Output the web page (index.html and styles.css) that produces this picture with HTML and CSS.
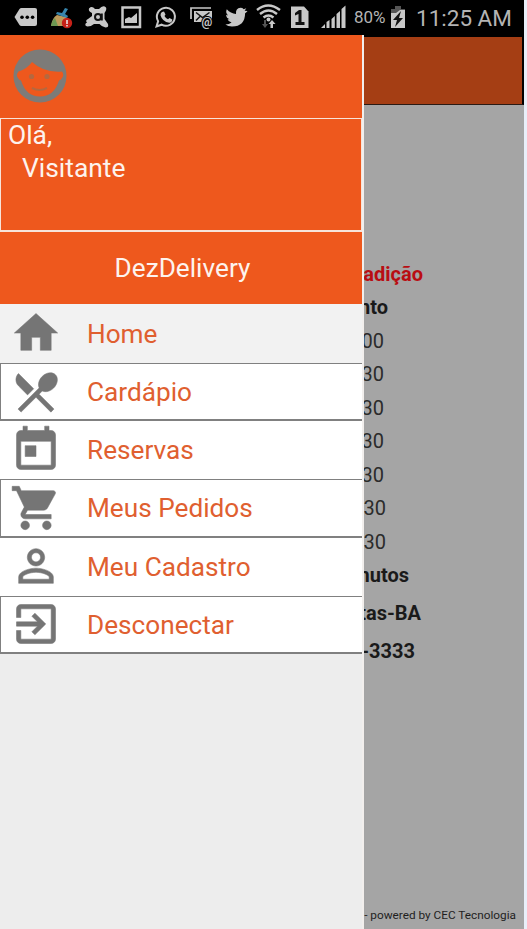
FILE: index.html
```
<!DOCTYPE html>
<html lang="pt-BR">
<head>
  <meta charset="UTF-8">
  <meta name="viewport" content="width=device-width, initial-scale=1.0">
  <title>DezDelivery</title>
  <link rel="stylesheet" href="styles.css">
</head>
<body>
  <div class="screen">
    <div class="status-bar">
      <svg class="slot" viewBox="0 0 35 35"><path fill="#c8c8c8" d="M5.500 17l5-8q.7-1 2-1h13.500q2 0 2 2v14q0 2-2 2H12.500q-1.300 0-2-1z"/><circle cx="13" cy="17.300" r="1.800"/><circle cx="18.300" cy="17.300" r="1.800"/><circle cx="23.600" cy="17.300" r="1.800"/></svg>
      <svg class="slot" viewBox="0 0 35 35"><path fill="#bd9a5b" d="M7 26q1-8 6-11l9 2 3 9z"/><path fill="#6d9853" d="M7 26q1-6 4-8l3 8z"/><path fill="#3785ad" d="M13 12l5 1 3-5 3 1-3 5 3 2-1 2-11-4z"/><circle cx="23" cy="23" r="5.200" fill="#c72118"/><path stroke="#eee" stroke-width="1.500" d="M23 20v4m0 1v1.500"/></svg>
      <svg class="slot" viewBox="0 0 35 35"><path fill="#c8c8c8" d="M10 8.500q3-3 6 .5h4q4-4.500 7-1.500 1 2-1.500 5.500v6l3.500 5q1 3.500-2.500 3.500-3.500-.5-6-3.500h-5.500q-3 2.500-6.500 2.500-3.500-1-1.500-3.500H8q-2-3 1-4l4-3v-3q-4-2-3-4.500z"/><circle cx="19" cy="17" r="3" fill="none" stroke="#111" stroke-width="2"/><path stroke="#111" stroke-width="2" d="M22.800 13.500v7"/></svg>
      <svg class="slot" viewBox="0 0 35 35"><path fill="none" stroke="#c8c8c8" stroke-width="2.500" d="M13.500 7.500h17.500v19.500H13.500z"/><path fill="#c8c8c8" d="M16 23v-4l4-2 2 1 6-5v10z"/></svg>
      <svg class="slot" viewBox="0 0 35 35"><path fill="none" stroke="#c8c8c8" stroke-width="2" d="M12.500 26.500l1.600-5.200a9 9 0 1 1 3.500 3.400z"/><path fill="#c8c8c8" d="M18 12l2-.5 1.500 3-1 1.500q1.200 2.300 3.500 3.300l1.500-1.300 2.800 1.500q0 3-3 3.200-7-1-8.800-7.500 0-2.200 1.500-3.200z"/></svg>
      <svg class="slot" viewBox="0 0 35 35"><path fill="none" stroke="#c8c8c8" stroke-width="1.700" d="M12 19V8h20"/><path fill="#c8c8c8" d="M15 11h18v11H15z"/><path fill="none" stroke="#111" stroke-width="1.500" d="M17 12.500l6.500 5 7-5M17 20.500l4-4"/><text x="22.500" y="25.500" class="at">@</text></svg>
      <svg class="slot" viewBox="0 0 35 35"><path fill="#c8c8c8" d="M33.500 11q-1 1.500-2.400 2.300Q31 26.500 18 26.500q-4 0-6.600-2 3.800 0 6.200-2-3.200-.4-4-3.200h2q-3.300-1-3.500-4.500l2 .6q-3-2.700-1.300-6.100 3.800 4.400 9.200 4.600-.5-5.700 4.500-6.100 2 0 3.200 1.400l2.600-1-1.700 2.500z"/></svg>
      <svg class="slot slot-wifi" viewBox="0 0 28 35"><g fill="none" stroke="#c8c8c8" stroke-width="2.400"><path d="M3 10q11-9 23 0M6 14q8.500-7 17 0M9.500 17.500q5-4 10 0"/></g><circle cx="14.500" cy="19.500" r="2" fill="#c8c8c8"/><path fill="#555" d="M10 20h2v4h2l-3 4-3-4h2z"/><path fill="#c8c8c8" d="M19 28h-2.500v-4h-2l3.500-4 3.500 4H19z"/></svg>
      <svg class="slot slot-sim" viewBox="0 0 36 35"><path fill="#c8c8c8" d="M9 6.500h13l4.500 5V28H9z"/><path fill="#111" d="M13 13l4-3h2.500v12h3v3h-9v-3h3v-8l-3.500 1.500z"/></svg>
      <svg class="slot slot-signal" viewBox="0 0 32 35"><path fill="#c8c8c8" d="M3 28l4-4v4zM8.500 28v-6l3-2v8zM13.500 28v-9l3.300-3v12zM18.500 28V14l3.500-3v17zM23.500 28V9l4-3.500V28z"/></svg>
      <span class="battery-level">80%</span>
      <svg class="battery" viewBox="0 0 16 24"><path fill="#555" d="M5 0h6v3h4v5H1V3h4z"/><path fill="#c8c8c8" d="M1 7l5 0 4-3h5v18H1z"/><path fill="#111" d="M11 5l-8 9h4l-2 7 8-9H9z"/></svg>
      <span class="clock">11:25 AM</span>
    </div>

    <div class="app">
      <div class="content">
        <div class="toolbar"></div>
        <div class="info">
          <p class="slogan">adição</p>
          <p class="strong service">nto</p>
          <p>00</p>
          <p>30</p>
          <p>30</p>
          <p>30</p>
          <p>30</p>
          <p class="weekend">30</p>
          <p class="weekend">30</p>
          <p class="strong minutes">nutos</p>
          <p class="strong city">tas-BA</p>
          <p class="strong phone">-3333</p>
        </div>
        <footer>- powered by CEC Tecnologia</footer>
      </div>

      <nav class="drawer">
        <div class="avatar-row">
          <svg class="avatar" viewBox="0 0 54 54">
            <circle cx="27" cy="27" r="26.500" fill="#7d7b78"/>
            <path fill="#ee581d" d="M19 13Q14 20 5.500 22.500 2.500 26 5 29q1 2 3 2.500Q13 47.500 27 47.500T46 31.500q2-.5 3-2.500 2.500-3 0-6.500Q31 24 19 13z"/>
            <circle cx="18.500" cy="27.500" r="2.600" fill="#b5683f"/>
            <circle cx="34" cy="27.500" r="2.600" fill="#b5683f"/>
            <path fill="none" stroke="#b5683f" stroke-width="2" d="M19 39q7.500 4 15 0"/>
          </svg>
        </div>
        <div class="greeting">
          <div>Olá,</div>
          <div class="user">Visitante</div>
        </div>
        <div class="brand">DezDelivery</div>
        <ul class="menu">
          <li class="active">
            <svg viewBox="0 0 24 24"><path d="M10 20v-6h4v6h5v-8h3L12 3 2 12h3v8z"/></svg>
            <span>Home</span>
          </li>
          <li class="boxed">
            <svg viewBox="0 0 24 24"><path d="M8.100 13.340l2.830-2.830L3.910 3.500c-1.560 1.560-1.560 4.090 0 5.660l4.190 4.180zm6.780-1.810c1.530.71 3.680.21 5.270-1.380 1.910-1.910 2.280-4.650.81-6.120-1.460-1.460-4.200-1.100-6.120.81-1.590 1.590-2.090 3.740-1.380 5.270L3.700 19.870l1.410 1.410L12 14.410l6.880 6.880 1.410-1.410L13.410 13l1.470-1.470z"/></svg>
            <span>Cardápio</span>
          </li>
          <li>
            <svg viewBox="0 0 24 24"><path d="M19 3h-1V1h-2v2H8V1H6v2H5c-1.110 0-1.990.9-1.990 2L3 19c0 1.100.89 2 2 2h14c1.100 0 2-.9 2-2V5c0-1.100-.9-2-2-2zm0 16H5V8h14v11zM7 10h5v5H7z"/></svg>
            <span>Reservas</span>
          </li>
          <li class="boxed">
            <svg viewBox="0 0 24 24"><path d="M7 18c-1.100 0-1.990.9-1.990 2S5.900 22 7 22s2-.9 2-2-.9-2-2-2zM1 2v2h2l3.600 7.590-1.350 2.450c-.16.280-.25.610-.25.960 0 1.100.9 2 2 2h12v-2H7.420c-.14 0-.25-.11-.25-.25l.03-.12.900-1.630h7.450c.75 0 1.410-.41 1.750-1.030l3.580-6.490c.08-.14.120-.31.120-.48 0-.55-.45-1-1-1H5.210l-.94-2H1zm16 16c-1.100 0-1.990.9-1.990 2s.89 2 1.990 2 2-.9 2-2-.9-2-2-2z"/></svg>
            <span>Meus Pedidos</span>
          </li>
          <li>
            <svg viewBox="0 0 24 24"><path d="M12 5.900c1.160 0 2.100.94 2.100 2.100s-.94 2.100-2.100 2.100S9.900 9.160 9.900 8s.94-2.100 2.100-2.100m0 9c2.970 0 6.100 1.460 6.100 2.100v1.100H5.900V17c0-.64 3.130-2.100 6.100-2.100M12 4C9.790 4 8 5.790 8 8s1.790 4 4 4 4-1.790 4-4-1.790-4-4-4zm0 9c-2.670 0-8 1.340-8 4v3h16v-3c0-2.660-5.330-4-8-4z"/></svg>
            <span>Meu Cadastro</span>
          </li>
          <li class="boxed">
            <svg viewBox="0 0 24 24"><path d="M10.090 15.590L11.500 17l5-5-5-5-1.410 1.410L12.670 11H3v2h9.670l-2.580 2.590zM19 3H5c-1.110 0-2 .9-2 2v4h2V5h14v14H5v-4H3v4c0 1.100.89 2 2 2h14c1.100 0 2-.9 2-2V5c0-1.100-.9-2-2-2z"/></svg>
            <span>Desconectar</span>
          </li>
        </ul>
      </nav>
    </div>
  </div>
</body>
</html>
```
FILE: styles.css
```
* {
  box-sizing: border-box;
}
body {
  margin: 0;
  background-color: #e9eff9;
  font-family: Roboto, "Liberation Sans", sans-serif;
}
.screen {
  width: 524px;
  height: 929px;
  display: flex;
  flex-direction: column;
  overflow: hidden;
}
.status-bar {
  height: 35px;
  flex: none;
  display: flex;
  align-items: center;
  padding-left: 9px;
  background-color: #000;
  color: #b4b4b4;
}
.slot {
  width: 35px;
  height: 35px;
  flex: none;
}
.slot:nth-child(4), .slot:nth-child(5), .slot:nth-child(6), .slot:nth-child(7) {
  margin-left: -5px;
  margin-right: 5px;
}
.slot-wifi {
  width: 28px;
}
.slot-sim {
  width: 36px;
}
.slot-signal {
  width: 32px;
}
.at {
  font-size: 12px;
  font-weight: bold;
  fill: #c8c8c8;
  stroke: #000;
  stroke-width: 2px;
  paint-order: stroke;
}
.battery-level {
  width: 36px;
  padding-left: 4px;
  font-size: 17px;
  line-height: 37px;
  white-space: nowrap;
}
.battery {
  width: 16px;
  height: 24px;
  margin-left: 4px;
}
.clock {
  margin-left: 10px;
  font-size: 22.500px;
  line-height: 35px;
  padding-top: 1px;
  white-space: nowrap;
}
.app {
  position: relative;
  flex: 1;
}
.content {
  height: 100%;
  display: flex;
  flex-direction: column;
  background-color: #a5a5a5;
}
.toolbar {
  height: 70px;
  flex: none;
  background-color: #a53e14;
  border-top: 2px solid #000;
  border-right: 2px solid #000;
  border-bottom: 1px solid #2b1a14;
}
.info {
  flex: 1;
  padding-top: 153px;
  font-size: 20px;
  line-height: 33.450px;
  text-align: right;
  color: #2b2b2b;
}
.info p {
  margin: 0;
  padding-right: 140px;
}
.info .slogan {
  padding-right: 101px;
  font-weight: bold;
  color: #b90d12;
}
.info .strong {
  font-weight: bold;
  color: #1a1a1a;
}
.info .service {
  padding-right: 136px;
}
.info .weekend {
  padding-right: 138px;
}
.info .minutes {
  padding-right: 115px;
}
.info .city {
  padding-right: 103px;
  line-height: 41px;
}
.info .phone {
  padding-right: 109px;
  line-height: 35px;
}
footer {
  padding: 0 8px 6px 0;
  font-size: 11.800px;
  line-height: 16px;
  text-align: right;
  color: #1f1f1f;
}
/* side menu, opened over the page */
.drawer {
  position: absolute;
  top: 0;
  left: 0;
  width: 364px;
  height: 100%;
  background-color: #ededed;
  border-right: 2px solid #f2efed;
}
.avatar-row {
  height: 83px;
  padding: 14px 0 0 13px;
  background-color: #ee581d;
}
.avatar {
  display: block;
  width: 54px;
  height: 54px;
}
.greeting {
  height: 114px;
  padding-left: 7px;
  border: 1px solid #f7e4da;
  border-bottom-width: 2px;
  background-color: #ee581d;
  color: #fdf3ee;
  font-size: 26.400px;
  line-height: 33px;
}
.user {
  padding-left: 14px;
}
.brand {
  height: 72px;
  padding-left: 3px;
  background-color: #ee581d;
  color: #fdf3ee;
  font-size: 26.200px;
  line-height: 72px;
  text-align: center;
}
.menu {
  margin: 0;
  padding: 0;
  list-style: none;
}
.menu li {
  height: 58.200px;
  display: flex;
  align-items: center;
  padding-left: 9px;
  border: 1px solid transparent;
  border-width: 1px 0 2px 1px;
  background-color: #fff;
  color: #e05f30;
  font-size: 26.200px;
}
.menu span {
  padding-top: 1px;
}
.menu .active {
  height: 59px;
  background-color: #f2f2f2;
}
.menu .boxed {
  border-color: #808080;
}
.menu svg {
  width: 52px;
  height: 52px;
  flex: none;
  margin-right: 25px;
  fill: #757575;
  stroke: #757575;
  stroke-width: 0.25px;
}
```
